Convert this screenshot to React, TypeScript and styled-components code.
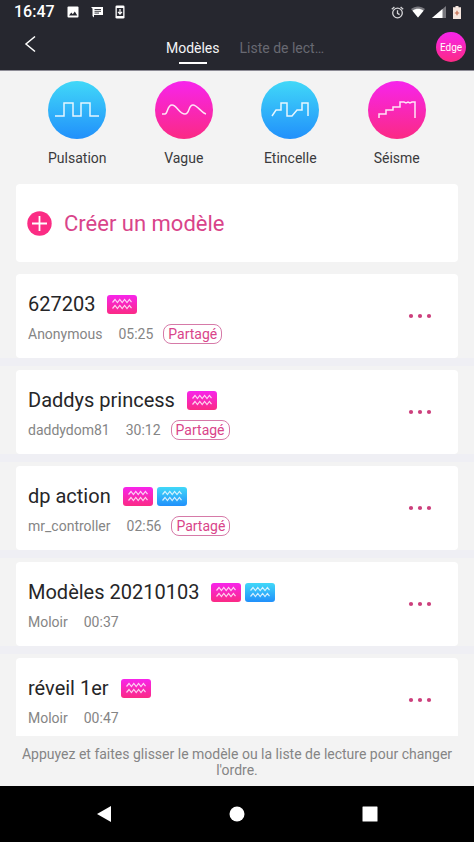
import React from "react";
import styled, { createGlobalStyle } from "styled-components";

const PINK = "linear-gradient(180deg, #f724ec 0%, #fb2a84 100%)";
const BLUE = "linear-gradient(180deg, #41d8f8 0%, #2190fb 100%)";

type Tone = "pink" | "blue";
const toneFill = (tone: Tone) => (tone === "pink" ? PINK : BLUE);

const GlobalStyle = createGlobalStyle`
  *, *::before, *::after { box-sizing: border-box; }
  body {
    margin: 0;
    background: #f3f3f3;
    font-family: Roboto, "Noto Sans", sans-serif;
    font-size: 14px;
    color: #262628;
  }
  button {
    font: inherit;
    color: inherit;
    border: 0;
    padding: 0;
    background: none;
    cursor: pointer;
  }
  ul { list-style: none; margin: 0; padding: 0; }
  h2, p { margin: 0; font-weight: 400; }
  svg { display: block; flex: none; }
`;

const Screen = styled.div`
  display: flex;
  flex-direction: column;
  height: 100vh;
  overflow: hidden;
`;

const Top = styled.header`
  flex: none;
  background: #26272f;
  color: #fff;
  border-bottom: 1px solid #8d8c96;
`;

const StatusBar = styled.div`
  display: flex;
  align-items: center;
  justify-content: space-between;
  height: 24px;
  padding: 0 13px 0 14px;
`;

const StatusGroup = styled.div<{ $gap: number }>`
  display: flex;
  align-items: center;
  gap: ${({ $gap }) => $gap}px;
`;

const Clock = styled.span`
  font-size: 16px;
  font-weight: 500;
  line-height: 24px;
`;

const NavRow = styled.nav`
  display: grid;
  grid-template-columns: 1fr auto 1fr;
  align-items: center;
  height: 46px;
  padding: 0 8px 0 24px;
`;

const BackButton = styled.button`
  justify-self: start;
  padding-bottom: 6px;
`;

const Tabs = styled.div`
  display: flex;
  gap: 20px;
  padding-top: 8px;
`;

const Tab = styled.button<{ $active?: boolean }>`
  display: flex;
  flex-direction: column;
  align-items: center;
  gap: 5px;
  line-height: 18px;
  color: ${({ $active }) => ($active ? "#f4f4f6" : "#686972")};

  &::after {
    content: "";
    width: 28px;
    height: 2px;
    background: ${({ $active }) => ($active ? "#fff" : "transparent")};
  }
`;

const DeviceButton = styled.button`
  justify-self: end;
  width: 30px;
  height: 30px;
  border-radius: 50%;
  background: ${PINK};
  font-size: 10px;
  text-align: center;
`;

const Presets = styled.section`
  flex: none;
  display: grid;
  grid-template-columns: repeat(4, 1fr);
  padding: 10px 24px 17px;
`;

const Preset = styled.button`
  display: flex;
  flex-direction: column;
  align-items: center;
  gap: 10px;
  line-height: 18px;
  color: #3a3a3c;
`;

const PresetDisc = styled.span<{ $tone: Tone }>`
  display: grid;
  place-items: center;
  width: 58px;
  height: 58px;
  border-radius: 50%;
  background: ${({ $tone }) => toneFill($tone)};
`;

const CreateButton = styled.button`
  flex: none;
  display: flex;
  align-items: center;
  gap: 12px;
  height: 78px;
  margin: 0 16px 8px;
  padding: 0 11px;
  border-radius: 4px;
  background: #fff;
  color: #d9448a;
  font-size: 22px;
`;

const List = styled.ul`
  flex: 1;
  min-height: 0;
  overflow: hidden;
  display: flex;
  flex-direction: column;
  gap: 8px;
  background: #efeff4;
`;

const ListItem = styled.li`
  flex: none;
  padding: 4px 16px 0;
  background: #f3f3f3;
`;

const Card = styled.article`
  display: flex;
  align-items: center;
  justify-content: space-between;
  height: 84px;
  padding: 0 26px 0 12px;
  border-radius: 4px;
  background: #fff;
`;

const CardText = styled.div`
  display: flex;
  flex-direction: column;
  gap: 8px;
  padding-top: 4px;
`;

const TitleRow = styled.div`
  display: flex;
  align-items: center;
  gap: 12px;
`;

const Title = styled.h2`
  font-size: 20px;
  line-height: 24px;
`;

const Badges = styled.div`
  display: flex;
  gap: 4px;
`;

const Badge = styled.span<{ $tone: Tone }>`
  display: grid;
  place-items: center;
  width: 30px;
  height: 19px;
  border-radius: 3px;
  background: ${({ $tone }) => toneFill($tone)};
`;

const Meta = styled.div`
  display: flex;
  align-items: center;
  height: 20px;
  color: #858585;
`;

const Duration = styled.span`
  margin-left: 16px;
`;

const Shared = styled.span`
  margin-left: 10px;
  padding: 0 4px;
  border: 1px solid #d67aa8;
  border-radius: 8px;
  line-height: 18px;
  color: #d9448a;
`;

const MoreButton = styled.button`
  padding: 8px 0;
`;

const Hint = styled.p`
  flex: none;
  padding: 10px 16px 8px;
  line-height: 16px;
  text-align: center;
  color: #858585;
`;

const SystemBar = styled.nav`
  flex: none;
  display: grid;
  grid-template-columns: repeat(3, 1fr);
  align-items: center;
  justify-items: center;
  height: 56px;
  padding: 0 38px;
  background: #000;
`;

const SystemButton = styled.button`
  display: grid;
  place-items: center;
  width: 32px;
  height: 32px;
`;

const presets: { name: string; tone: Tone; path: string }[] = [
  { name: "Pulsation", tone: "blue", path: "M1 20H10V7H19V20H27V7H36V20H45" },
  {
    name: "Vague",
    tone: "pink",
    path: "M1 18H4C7 18 6 9 11 9C16 9 18 18 24 18C29 18 27 9 32 9C36 9 41 17 45 18",
  },
  {
    name: "Etincelle",
    tone: "blue",
    path: "M5 20L9 14H14V7H20V20H25L30 14H35V7H41V20",
  },
  {
    name: "Séisme",
    tone: "pink",
    path: "M5 22V18H12V14H19V11H26V6H30L32 7L34 6L36 7L38 6H41V22",
  },
];

interface Model {
  title: string;
  author: string;
  duration: string;
  shared: boolean;
  badges: Tone[];
}

const models: Model[] = [
  { title: "627203", author: "Anonymous", duration: "05:25", shared: true, badges: ["pink"] },
  { title: "Daddys princess", author: "daddydom81", duration: "30:12", shared: true, badges: ["pink"] },
  { title: "dp action", author: "mr_controller", duration: "02:56", shared: true, badges: ["pink", "blue"] },
  { title: "Modèles 20210103", author: "Moloir", duration: "00:37", shared: false, badges: ["pink", "blue"] },
  { title: "réveil 1er", author: "Moloir", duration: "00:47", shared: false, badges: ["pink"] },
];

const WaveIcon = () => (
  <svg width="20" height="13" viewBox="0 0 20 13" fill="none" stroke="#fff" strokeOpacity=".8" strokeWidth="1.2">
    <path d="M0.5 4.5L3 1.5L5.4 4.5L7.8 1.5L10.2 4.5L12.6 1.5L15 4.5L17.4 1.5L19.5 4.2" />
    <path d="M0.5 10.5L3 7.5L5.4 10.5L7.8 7.5L10.2 10.5L12.6 7.5L15 10.5L17.4 7.5L19.5 10.2" />
  </svg>
);

export default function App() {
  return (
    <Screen>
      <GlobalStyle />
      <Top>
        <StatusBar>
          <StatusGroup $gap={12}>
            <Clock>16:47</Clock>
            <svg width="12" height="12" viewBox="0 0 12 12">
              <rect x="0.5" y="0.5" width="11" height="11" rx="1" fill="#fff" />
              <path d="M2 9.5L4.3 6.5L5.8 8.2L7.8 5.5L10.3 9.5Z" fill="#26272f" />
            </svg>
            <svg width="12" height="12" viewBox="0 0 12 12">
              <path d="M0 1H12V9H3V11.5L1.5 10V2.5Z" fill="#fff" />
              <path d="M3.5 3.5H10M3.5 5.3H10M3.5 7.1H8" stroke="#26272f" strokeWidth=".9" />
            </svg>
            <svg width="10" height="14" viewBox="0 0 10 14">
              <rect x="0.5" y="0.5" width="9" height="13" rx="1.3" fill="#fff" />
              <path d="M1.8 3H8.2V11H1.8Z" fill="#26272f" />
              <path d="M5 4V8.5M3 6.8L5 9L7 6.8" fill="none" stroke="#fff" strokeWidth="1.2" />
            </svg>
          </StatusGroup>
          <StatusGroup $gap={7}>
            <svg width="13" height="13" viewBox="0 0 13 13" fill="none" stroke="#d6d6d9" strokeWidth="1.3">
              <circle cx="6.5" cy="7" r="4.8" />
              <path d="M6.5 4.3V7.3L8.6 8.6M0.8 3.2L3.4 1M12.2 3.2L9.6 1" />
            </svg>
            <svg width="14" height="12" viewBox="0 0 14 12">
              <path d="M0 3C4 -0.4 10 -0.4 14 3L7 11.5Z" fill="#77777d" />
              <path d="M1.5 4.8C5 2.2 9 2.2 12.5 4.8L7 11.5Z" fill="#fff" />
            </svg>
            <svg width="14" height="12" viewBox="0 0 14 12">
              <path d="M14 0V12H0Z" fill="#77777d" />
              <path d="M10.5 3V12H0Z" fill="#fff" />
            </svg>
            <svg width="8" height="13" viewBox="0 0 8 13">
              <path d="M2.5 0H5.5V1.2H8V13H0V1.2H2.5Z" fill="#f5e6df" />
              <path d="M4 4.8V9.2M1.8 7H6.2" stroke="#c5694a" strokeWidth="1.2" />
            </svg>
          </StatusGroup>
        </StatusBar>
        <NavRow>
          <BackButton aria-label="Retour">
            <svg width="12" height="18" viewBox="0 0 12 18" fill="none" stroke="#fff" strokeWidth="1.5">
              <path d="M11 1.5L2 9L11 16.5" />
            </svg>
          </BackButton>
          <Tabs>
            <Tab $active>Modèles</Tab>
            <Tab>Liste de lect…</Tab>
          </Tabs>
          <DeviceButton>Edge</DeviceButton>
        </NavRow>
      </Top>

      <Presets>
        {presets.map((p) => (
          <Preset key={p.name}>
            <PresetDisc $tone={p.tone}>
              <svg width="46" height="28" viewBox="0 0 46 28" fill="none" stroke="#fff" strokeOpacity=".88" strokeWidth="1.5">
                <path d={p.path} />
              </svg>
            </PresetDisc>
            {p.name}
          </Preset>
        ))}
      </Presets>

      <CreateButton>
        <svg width="25" height="25" viewBox="0 0 25 25">
          <circle cx="12.5" cy="12.5" r="12.2" fill="#fb2c84" />
          <path d="M12.5 5V20M5 12.5H20" stroke="#fff" strokeWidth="1.8" />
        </svg>
        Créer un modèle
      </CreateButton>

      <List>
        {models.map((m) => (
          <ListItem key={m.title}>
            <Card>
              <CardText>
                <TitleRow>
                  <Title>{m.title}</Title>
                  <Badges>
                    {m.badges.map((tone) => (
                      <Badge key={tone} $tone={tone}>
                        <WaveIcon />
                      </Badge>
                    ))}
                  </Badges>
                </TitleRow>
                <Meta>
                  <span>{m.author}</span>
                  <Duration>{m.duration}</Duration>
                  {m.shared && <Shared>Partagé</Shared>}
                </Meta>
              </CardText>
              <MoreButton aria-label={`Options de ${m.title}`}>
                <svg width="24" height="6" viewBox="0 0 24 6" fill="#cc3f7c">
                  <circle cx="3" cy="3" r="2.1" />
                  <circle cx="12" cy="3" r="2.1" />
                  <circle cx="21" cy="3" r="2.1" />
                </svg>
              </MoreButton>
            </Card>
          </ListItem>
        ))}
      </List>

      <Hint>Appuyez et faites glisser le modèle ou la liste de lecture pour changer l'ordre.</Hint>

      <SystemBar>
        <SystemButton aria-label="Précédent">
          <svg width="16" height="16" viewBox="0 0 16 16" fill="#fff">
            <path d="M15 0V16L1 8Z" />
          </svg>
        </SystemButton>
        <SystemButton aria-label="Accueil">
          <svg width="16" height="16" viewBox="0 0 16 16" fill="#fff">
            <circle cx="8" cy="8" r="7.5" />
          </svg>
        </SystemButton>
        <SystemButton aria-label="Applications récentes">
          <svg width="16" height="16" viewBox="0 0 16 16" fill="#fff">
            <rect x="0.5" y="0.5" width="15" height="15" rx="0.5" />
          </svg>
        </SystemButton>
      </SystemBar>
    </Screen>
  );
}
